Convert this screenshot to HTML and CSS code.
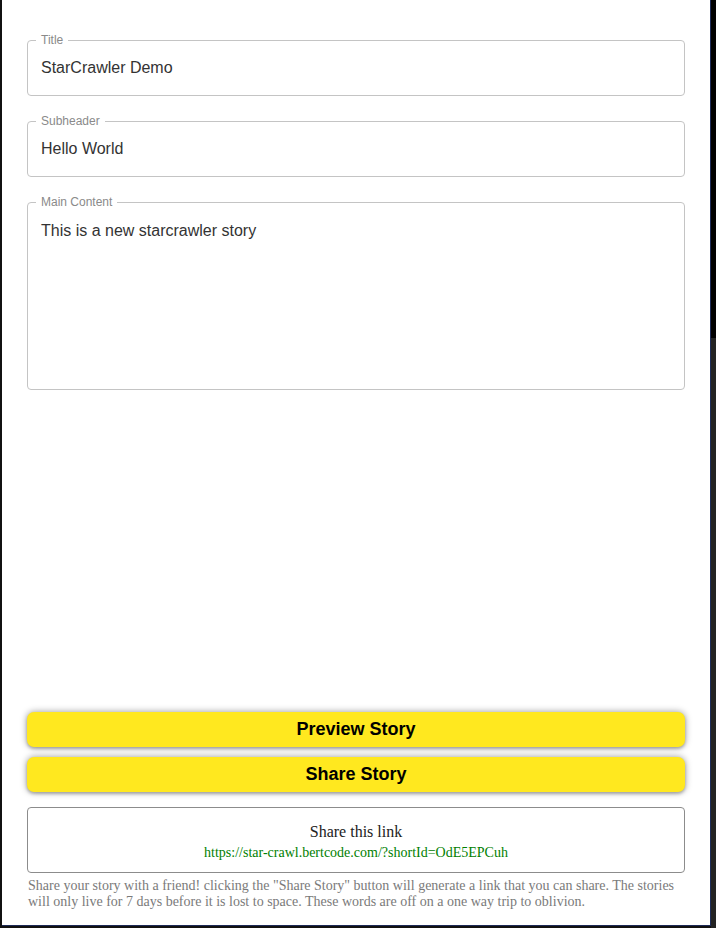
FILE: index.html
```html
<!DOCTYPE html>
<html lang="en">
<head>
<meta charset="utf-8">
<title>StarCrawler</title>
<link rel="stylesheet" href="styles.css">
</head>
<body>
<main class="panel">
  <fieldset class="field">
    <legend class="field-label">Title</legend>
    <div class="field-value">StarCrawler Demo</div>
  </fieldset>
  <fieldset class="field">
    <legend class="field-label">Subheader</legend>
    <div class="field-value">Hello World</div>
  </fieldset>
  <fieldset class="field field-multi">
    <legend class="field-label">Main Content</legend>
    <div class="field-value">This is a new starcrawler story</div>
  </fieldset>

  <div class="actions">
    <button class="btn">Preview Story</button>
    <button class="btn">Share Story</button>
  </div>

  <div class="share-box">
    <div class="share-title">Share this link</div>
    <a class="share-link" href="#">https://star-crawl.bertcode.com/?shortId=OdE5EPCuh</a>
  </div>
  <p class="note">Share your story with a friend! clicking the "Share Story" button will generate a link that you can share. The stories will only live for 7 days before it is lost to space. These words are off on a one way trip to oblivion.</p>
</main>
</body>
</html>
```

FILE: styles.css
```css
html, body {
  margin: 0;
  padding: 0;
}
body {
  width: 716px;
  height: 928px;
  overflow: hidden;
  background: linear-gradient(to bottom, #000 0, #000 338px, #232323 338px, #232323 100%) right top / 5px 100% no-repeat, #111;
  font-family: "Liberation Sans", Arial, sans-serif;
}
.panel {
  box-sizing: border-box;
  margin-left: 2px;
  width: 709px;
  height: 926px;
  background: #fff;
  border-right: 1px solid #1d2b57;
  border-bottom: 1px solid #1d2b57;
  padding: 33px 25px 15px 25px;
  display: flex;
  flex-direction: column;
}
.field {
  margin: 0 0 18px 0;
  padding: 0;
  border: 1px solid #c4c4c4;
  border-radius: 4px;
  min-width: 0;
}
.field-label {
  margin-left: 8px;
  padding: 0 5px;
  font-size: 12px;
  line-height: 15px;
  color: #8a8a8a;
}
.field-value {
  padding: 10px 13px 18px 13px;
  font-size: 16px;
  line-height: 19px;
  color: #333;
}
.field-multi {
  height: 195px;
  box-sizing: border-box;
  margin-bottom: 0;
}
.field-multi .field-value {
  padding-top: 11px;
}
.actions {
  margin-top: auto;
  display: flex;
  flex-direction: column;
  gap: 10px;
}
.btn {
  height: 35px;
  border: none;
  border-radius: 7px;
  background: #ffe81f;
  color: #000;
  font-family: "Liberation Sans", Arial, sans-serif;
  font-weight: bold;
  font-size: 18px;
  box-shadow: 0 0 7px rgba(0, 0, 0, 0.4), 0 2px 3px rgba(0, 0, 0, 0.2);
  padding: 0;
}
.share-box {
  margin-top: 15px;
  border: 1px solid #8c8c8c;
  border-radius: 4px;
  padding: 14px 0 8px 0;
  text-align: center;
  font-family: "Liberation Serif", "Times New Roman", serif;
}
.share-title {
  font-size: 16px;
  line-height: 20px;
  color: #222;
}
.share-link {
  display: block;
  font-size: 14px;
  line-height: 22px;
  color: #008000;
  text-decoration: none;
}
.note {
  margin: 5px 0 0 1px;
  font-family: "Liberation Serif", "Times New Roman", serif;
  font-size: 14px;
  line-height: 16px;
  color: #7a7a7a;
}
```
